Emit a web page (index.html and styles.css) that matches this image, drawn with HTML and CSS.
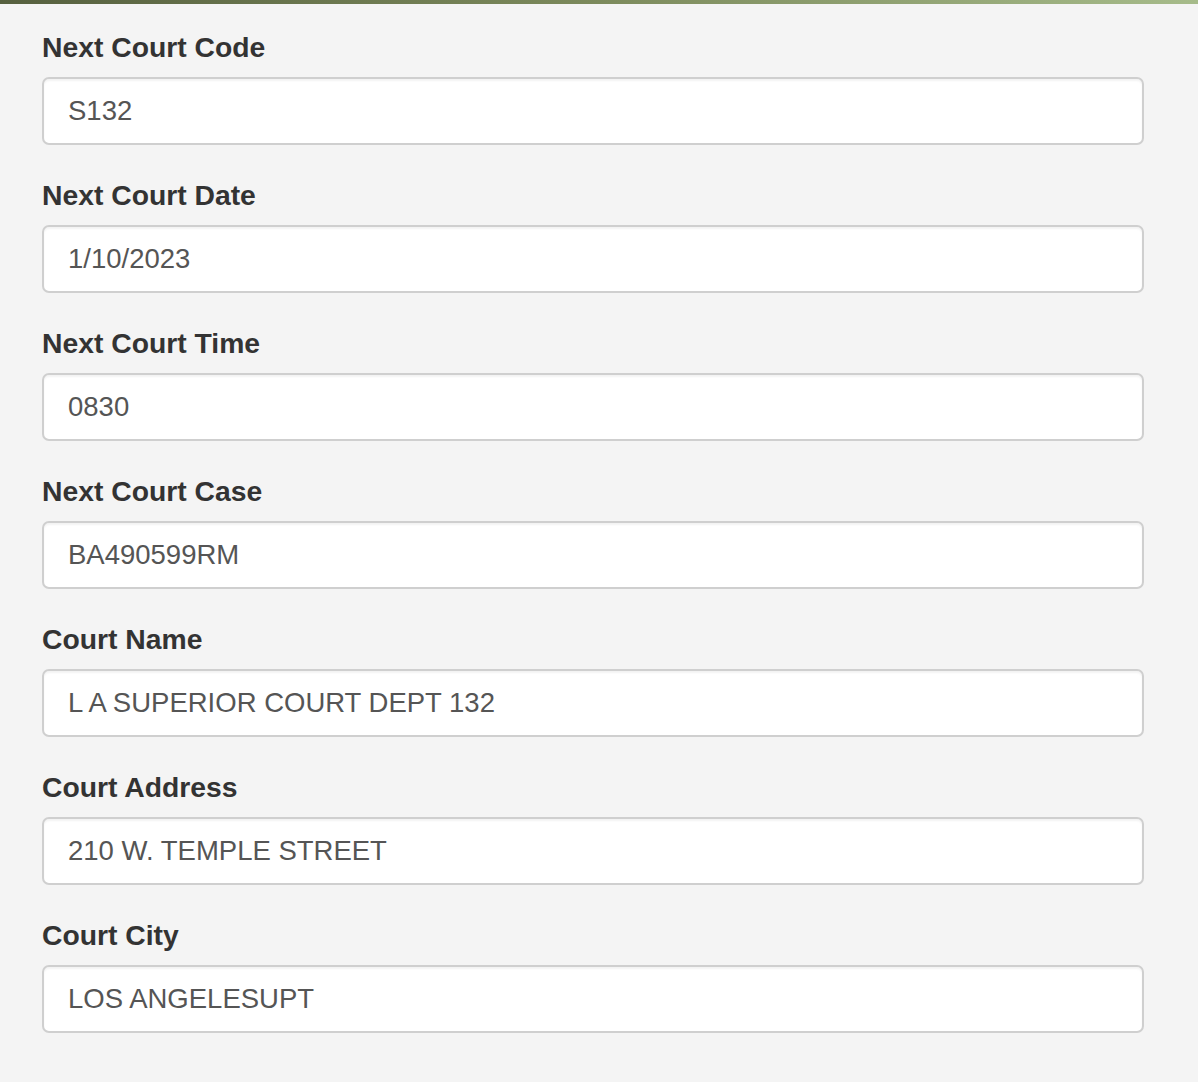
FILE: index.html
```html
<!DOCTYPE html>
<html lang="en">

<head>
  <meta charset="UTF-8">
  <title>Court Details</title>
  <link rel="stylesheet" href="styles.css">
</head>

<body>
  <div class="topbar"></div>
  <div class="panel">
    <div class="form-group">
      <label>Next Court Code</label>
      <div class="form-control">S132</div>
    </div>
    <div class="form-group">
      <label>Next Court Date</label>
      <div class="form-control">1/10/2023</div>
    </div>
    <div class="form-group">
      <label>Next Court Time</label>
      <div class="form-control">0830</div>
    </div>
    <div class="form-group">
      <label>Next Court Case</label>
      <div class="form-control">BA490599RM</div>
    </div>
    <div class="form-group">
      <label>Court Name</label>
      <div class="form-control">L A SUPERIOR COURT DEPT 132</div>
    </div>
    <div class="form-group">
      <label>Court Address</label>
      <div class="form-control">210 W. TEMPLE STREET</div>
    </div>
    <div class="form-group">
      <label>Court City</label>
      <div class="form-control">LOS ANGELESUPT</div>
    </div>
  </div>
</body>

</html>
```

FILE: styles.css
```css
html,
body {
  margin: 0;
  padding: 0;
  height: 100%;
  background: #f4f4f4;
  font-family: "Liberation Sans", Arial, sans-serif;
}

.topbar {
  height: 4px;
  background: linear-gradient(to right, #56603f, #7c8a5c 50%, #a6bb8a);
}

.panel {
  padding: 23px 54px 0 42px;
}

.form-group {
  margin-bottom: 30px;
}

label {
  display: block;
  font-size: 28.3px;
  font-weight: bold;
  line-height: 41px;
  margin-bottom: 9px;
  color: #333;
}

.form-control {
  height: 68px;
  box-sizing: border-box;
  border: 2px solid #cfcfcf;
  border-radius: 7px;
  background: #fff;
  padding: 0 24px;
  font-size: 27.5px;
  line-height: 64px;
  color: #555;
  box-shadow: inset 0 2px 2px rgba(0, 0, 0, 0.05);
}
```
